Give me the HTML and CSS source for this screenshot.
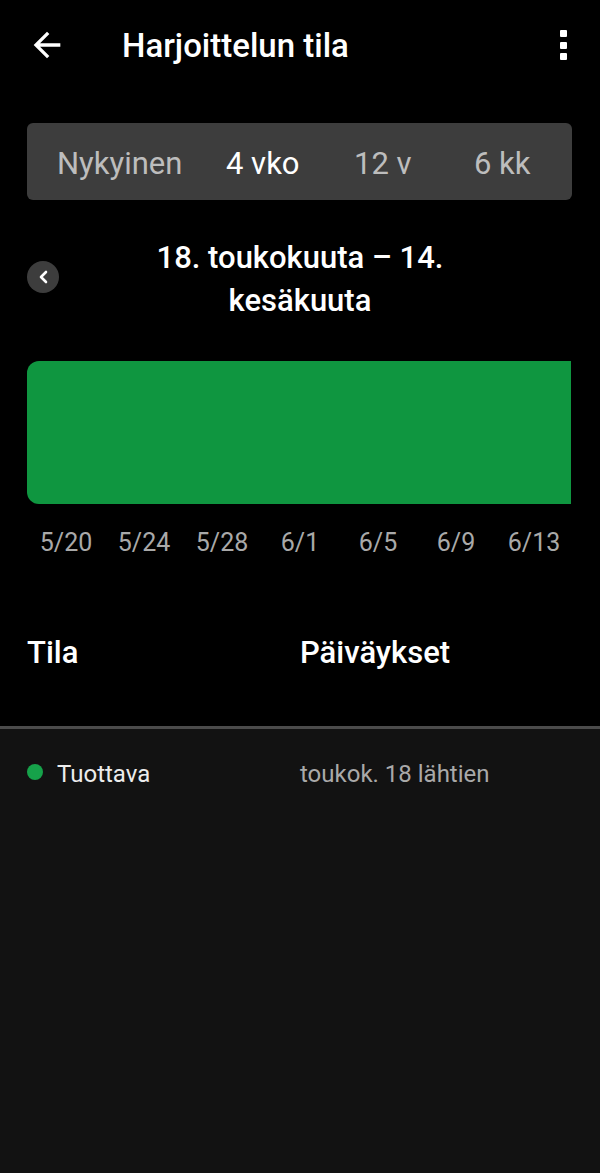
FILE: index.html
```html
<!DOCTYPE html><html lang="fi">
<head>
<meta charset="UTF-8">
<meta name="viewport" content="width=device-width,initial-scale=1.0">
<title>Harjoittelun tila</title>
<link rel="stylesheet" href="styles.css">
</head>
<body>
<header class="topbar">
<button class="icon-btn back" aria-label="Takaisin">
<svg viewBox="0 0 24 24" width="40" height="40"><path fill="#fff" d="M20 11H7.83l5.59-5.59L12 4l-8 8 8 8 1.41-1.41L7.83 13H20v-2z"/></svg>
</button>
<h1>Harjoittelun tila</h1>
<button class="icon-btn more" aria-label="Lisää"><span></span><span></span><span></span></button>
</header>

<nav class="range">
<span class="tab">Nykyinen</span>
<span class="tab active">4 vko</span>
<span class="tab">12 v</span>
<span class="tab">6 kk</span>
</nav>

<section class="period">
<button class="prev" aria-label="Edellinen">
<svg viewBox="0 0 32 32" width="32" height="32"><path d="M19 11l-5 5 5 5" fill="none" stroke="#fff" stroke-width="2.6" stroke-linecap="round" stroke-linejoin="round"/></svg>
</button>
<h2>18. toukokuuta – 14. kesäkuuta</h2>
<span></span>
</section>

<div class="chart"><div class="bar"></div></div>
<div class="axis">
<span>5/20</span><span>5/24</span><span>5/28</span><span>6/1</span><span>6/5</span><span>6/9</span><span>6/13</span>
</div>

<div class="table-head">
<span>Tila</span>
<span>Päiväykset</span>
</div>

<main class="list">
<div class="row">
<span class="state"><i class="dot"></i>Tuottava</span>
<span class="dates">toukok. 18 lähtien</span>
</div>
</main>
</body>
</html>
```

FILE: styles.css
```css
*,*::before,*::after{margin:0;padding:0;box-sizing:border-box}
:root{--green:#0f9640;--muted:#a9a9a9;--chip:#3d3d3d}
html,body{background:#000}
body{font-family:Roboto,"Noto Sans",sans-serif;color:#fff;min-height:100vh;display:flex;flex-direction:column}
button{background:none;border:none;color:inherit;font:inherit;cursor:pointer}

.topbar{height:90px;display:flex;align-items:center;padding:0 27px}
.back{width:40px;height:40px;display:flex}
.topbar h1{font-size:33px;font-weight:500;line-height:39px;margin-left:55px;flex:1}
.more{display:flex;flex-direction:column;gap:4.5px;margin-right:6px}
.more span{display:block;width:7px;height:7px;background:#fff;border-radius:1px}

.range{margin:33px 28px 0 27px;height:77px;background:var(--chip);border-radius:6px;display:grid;grid-template-columns:169px 128px 120px 1fr;align-items:center;padding:5px 0 0 30px}
.tab{font-size:31px;line-height:36px;color:#bdbdbd}
.tab.active{color:#fff}

.period{margin-top:36px;display:grid;grid-template-columns:32px 1fr 32px;align-items:center;padding:0 27px}
.prev{width:32px;height:32px;border-radius:50%;background:var(--chip);display:flex;margin-top:-4px}
.period h2{font-size:31px;font-weight:500;line-height:43px;text-align:center;padding:0 55px}

.chart{margin:39px 29px 0 27px}
.bar{height:143px;background:var(--green);border-radius:12px 0 0 12px}

.axis{margin:24px 0 0 27px;display:grid;grid-template-columns:repeat(7,78px);font-size:25px;line-height:30px;color:var(--muted);text-align:center}

.table-head{margin-top:75px;display:grid;grid-template-columns:273px 1fr;padding:0 27px 53px;font-size:31px;font-weight:500;line-height:40px;border-bottom:3px solid #4b4b4b}

.list{flex:1;background:#121212;padding-top:30px}
.row{display:grid;grid-template-columns:273px 1fr;padding:0 27px;font-size:24px;line-height:30px}
.state{display:flex;align-items:center;color:#ececec}
.dot{width:16px;height:16px;border-radius:50%;background:#16a24a;margin:0 14px 4px 0}
.dates{color:var(--muted)}
```
